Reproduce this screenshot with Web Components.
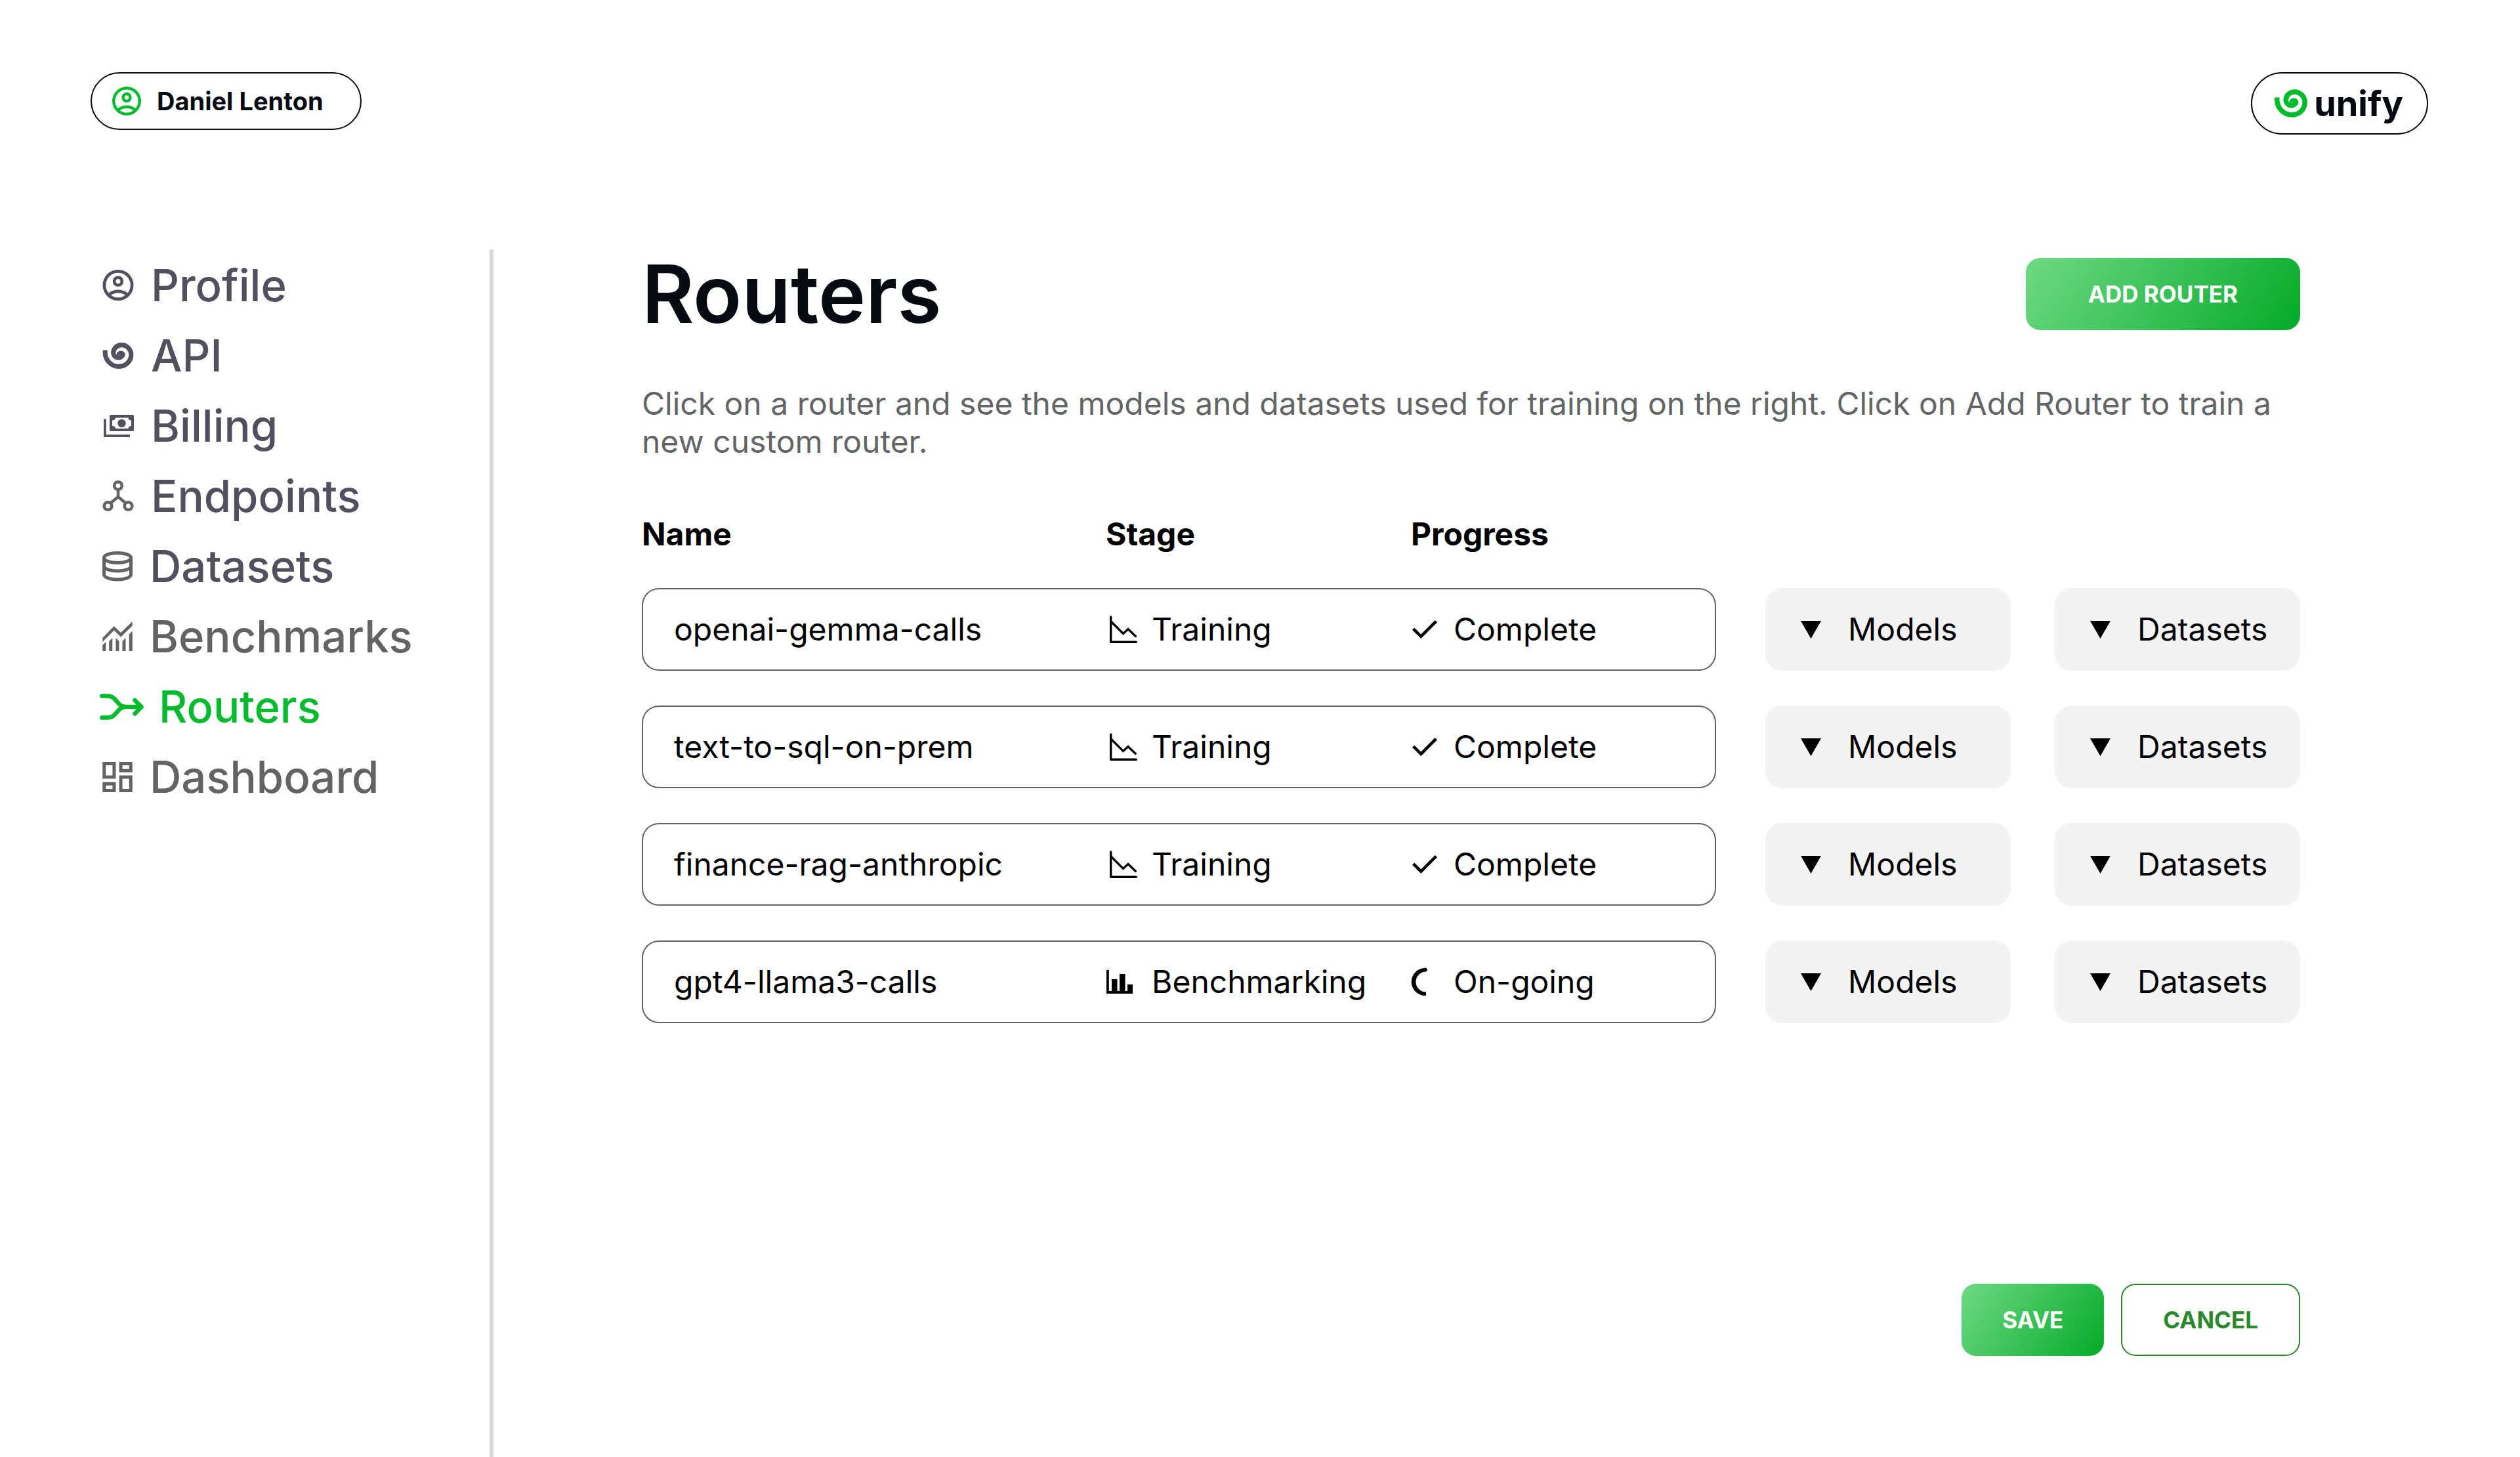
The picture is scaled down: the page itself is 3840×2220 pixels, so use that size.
<!DOCTYPE html>
<html lang="en">
<head>
<meta charset="utf-8">
<title>Routers</title>
<style>
  body { margin: 0; background: #fff; font-family: Inter, "Liberation Sans", sans-serif; color: #080a12; }
</style>
</head>
<body>
<unify-app>
  <user-chip slot="header">Daniel Lenton</user-chip>
  <brand-chip slot="header">unify</brand-chip>

  <side-nav slot="nav">
    <nav-item icon="profile">Profile</nav-item>
    <nav-item icon="spiral">API</nav-item>
    <nav-item icon="billing">Billing</nav-item>
    <nav-item icon="endpoints">Endpoints</nav-item>
    <nav-item icon="datasets">Datasets</nav-item>
    <nav-item icon="benchmarks" muted>Benchmarks</nav-item>
    <nav-item icon="routers" current>Routers</nav-item>
    <nav-item icon="dashboard" muted>Dashboard</nav-item>
  </side-nav>

  <page-heading>
    Routers
    <action-button slot="action" size="wide">ADD ROUTER</action-button>
    <span slot="intro">Click on a router and see the models and datasets used for training on the right. Click on Add Router to train a new custom router.</span>
  </page-heading>

  <router-table></router-table>

  <form-actions>
    <action-button>SAVE</action-button>
    <action-button kind="outline">CANCEL</action-button>
  </form-actions>
</unify-app>

<script>
const ICONS = {
  profile: { w: 48, h: 47, box: '80 -880 800 800', body: '<path fill="currentColor" d="M234-276q51-39 114-61.5T480-360q69 0 132 22.5T726-276q35-41 54.5-93T800-480q0-133-93.5-226.5T480-800q-133 0-226.5 93.5T160-480q0 59 19.5 111t54.5 93Zm246-164q-59 0-99.5-40.5T340-580q0-59 40.5-99.5T480-720q59 0 99.5 40.5T620-580q0 59-40.5 99.5T480-440Zm0 360q-83 0-156-31.5T197-197q-54-54-85.5-127T80-480q0-83 31.5-156T197-763q54-54 127-85.5T480-880q83 0 156 31.5T763-763q54 54 85.5 127T880-480q0 83-31.5 156T763-197q-54 54-127 85.5T480-80Zm0-80q53 0 100-15.5t86-44.5q-39-29-86-44.5T480-280q-53 0-100 15.5T294-220q39 29 86 44.5T480-160Zm0-360q26 0 43-17t17-43q0-26-17-43t-43-17q-26 0-43 17t-17 43q0 26 17 43t43 17Z"/>' },
  spiral: { w: 48, h: 40, box: '0 0 151 129', body: '<path fill="none" stroke="currentColor" stroke-width="23" d="M11.5 37V49A69 69 0 0 0 80 117.500A60 58 0 0 0 139.500 60A48 48 0 0 0 91 11.500A40 40 0 0 0 51.500 50A26 26 0 0 0 76 74A21 21 0 0 0 99 58"/><path fill="currentColor" d="M110.500 60A21 21 0 0 0 89 40C76 40 67 50 68 59C69 65 74 68 79 67C74 62 80 58 84 62C90 68 110 72 110.500 60Z"/>' },
  billing: { w: 48, h: 34, box: '-2 0 48 34', body: '<path fill="currentColor" fill-rule="evenodd" d="M11 0H44A2 2 0 0 1 46 2V23A2 2 0 0 1 44 25H11A2 2 0 0 1 9 23V2A2 2 0 0 1 11 0ZM18 4.500C18 7 16 8.500 13 8.500V17C16 17 18 18.500 18 21H37.500C37.500 18.500 39.500 17 42 17V8.500C39.500 8.500 37.500 7 37.500 4.500Z"/><circle cx="27.500" cy="13" r="6.200" fill="currentColor"/><path fill="none" stroke="currentColor" stroke-width="3.800" d="M1.900 6.500V32.100H40"/>' },
  endpoints: { w: 48, h: 47, box: '0 0 47 47', tint: '#626365', body: '<g fill="none" stroke="currentColor" stroke-width="4.600"><circle cx="23.500" cy="8" r="5.800"/><circle cx="8" cy="39" r="5.800"/><circle cx="39" cy="39" r="5.800"/><path d="M23.500 14V25L12 34.500M23.500 25L35 34.500"/></g>' },
  datasets: { w: 46, h: 46, box: '0 0 46 46', tint: '#626365', body: '<g fill="none" stroke="currentColor" stroke-width="5"><ellipse cx="23" cy="10" rx="20.500" ry="7.500"/><path d="M2.500 10V35.500C2.500 39.600 11.700 43 23 43S43.500 39.600 43.500 35.500V10M2.500 22.500C2.500 26.600 11.700 30 23 30S43.500 26.600 43.500 22.500"/></g>' },
  benchmarks: { w: 46, h: 45, box: '0 0 45.500 45', body: '<path fill="currentColor" d="M0 25L17.500 7L27.800 17L45.500 0V6.500L27.800 23.500L17.500 13.500L0 31ZM0 45V36L5 31V45ZM10 45V30L15 25V45ZM20.200 45V25L25.200 30V45ZM30.200 45V30L35.200 25V45ZM40.500 45V19.500L45.500 14.500V45Z"/>' },
  routers: { w: 60, h: 40, box: '4 0 60 40', body: '<path fill="none" stroke="currentColor" stroke-width="6.500" stroke-linecap="round" stroke-linejoin="round" d="M3.300 3.500H12C27 3.500 25 20 40 20H63.500M3.300 36.500H12C27 36.500 25 20 40 20M53.500 10L63.500 20L53.500 30.500"/>' },
  dashboard: { w: 46, h: 46, box: '0 0 45.500 46', body: '<path fill="none" stroke="currentColor" stroke-width="5" d="M2.500 2.500H17.700V23H2.500ZM27.800 2.500H43V13.200H27.800ZM2.500 33.200H17.700V43.500H2.500ZM27.800 23H43V43.500H27.800Z"/>' },
  training: { w: 48, h: 42, box: '0 0 48 42', body: '<g fill="none" stroke="currentColor" stroke-linecap="round" stroke-linejoin="round"><path stroke-width="3.400" d="M7.700 2V40.300H46.300"/><path stroke-width="3.200" stroke-linejoin="miter" d="M8 9L26.500 27.500L34 20.500L45.500 31.500"/></g>' },
  benchmarking: { w: 48, h: 42, box: '0 0 48 42', body: '<path fill="currentColor" d="M1 3H4.800V35H9V17H17.500V35H21V9H29.500V35H33V25H41V39H1Z"/>' },
  check: { w: 43, h: 42, box: '-2 -7 43 42', body: '<path fill="currentColor" d="M13.300 28L0 14.700L3.300 11.400L13.300 21.400L34.700 0L38 3.300Z"/>' },
  ongoing: { w: 43, h: 42, box: '-2 0 43 42', body: '<path fill="currentColor" d="M18.500 0A2.750 2.750 0 0 1 21 5.500A15.500 15.500 0 0 0 21 36.500V42A21 21 0 0 1 18.500 0Z"/>' },
  caret: { w: 31, h: 27, box: '0 0 31 27', body: '<path fill="currentColor" d="M0 0H31L15.500 27Z"/>' }
};

function define(name, css, html, setup) {
  const template = document.createElement('template');
  template.innerHTML = `<style>*,*::before{box-sizing:border-box}${css}</style>${html}`;
  customElements.define(name, class extends HTMLElement {
    constructor() {
      super();
      this.attachShadow({ mode: 'open' }).append(template.content.cloneNode(true));
    }
    connectedCallback() { if (setup) setup(this, this.shadowRoot); }
  });
}

function placeIcon(root, name) {
  const icon = document.createElement('ui-icon');
  icon.setAttribute('name', name);
  root.querySelector('.icon').replaceChildren(icon);
}

define('ui-icon',
  `:host{display:block;flex:none} svg{display:block;overflow:visible}`,
  `<svg aria-hidden="true"></svg>`,
  (host, root) => {
    const icon = ICONS[host.getAttribute('name')];
    const svg = root.querySelector('svg');
    svg.setAttribute('viewBox', icon.box);
    svg.setAttribute('width', host.getAttribute('width') || icon.w);
    svg.setAttribute('height', host.getAttribute('height') || icon.h);
    if (icon.tint) svg.style.color = icon.tint;
    svg.innerHTML = icon.body;
  });

define('user-chip',
  `:host{display:block}
   button{display:flex;align-items:center;gap:24px;height:88px;padding:0 56px 0 31px;border:2px solid #080a12;border-radius:44px;background:#fff;color:#080a12;font:700 38px/46px Inter,sans-serif}
   ui-icon{color:#00bb2b}`,
  `<button type="button"><ui-icon name="profile" width="44" height="44"></ui-icon><slot></slot></button>`);

define('brand-chip',
  `:host{display:block}
   a{display:flex;align-items:center;gap:10px;height:95px;padding:0 36px 0 34px;border:2px solid #000;border-radius:48px;color:#080a12;font:700 54px/66px Inter,sans-serif;text-decoration:none}
   ui-icon{color:#00bb2b}`,
  `<a href="#home"><ui-icon name="spiral" width="50" height="43"></ui-icon><slot></slot></a>`);

define('nav-item',
  `:host{display:block;color:#52505e} :host([muted]){color:#626365} :host([current]){color:#00bb2b}
   a{display:flex;align-items:center;gap:26px;color:inherit;font-weight:500;font-size:67px;line-height:83px;text-decoration:none}
   .icon{flex:none}`,
  `<a href="#"><span class="icon"></span><slot></slot></a>`,
  (host, root) => {
    const name = host.getAttribute('icon');
    placeIcon(root, name);
    const link = root.querySelector('a');
    link.href = '#' + name;
    if (host.hasAttribute('current')) link.setAttribute('aria-current', 'page');
  });

define('side-nav',
  `:host{display:block;height:100%} nav{display:flex;flex-direction:column;gap:24px;padding:13px 0 0 156px}`,
  `<nav aria-label="Main"><slot></slot></nav>`);

define('action-button',
  `:host{display:block}
   button{height:110px;padding:0 62px;border:0;border-radius:22px;background:linear-gradient(125deg,#6fd985,#04aa28);color:#fff;font:700 35px/44px Inter,sans-serif}
   :host([size=wide]) button{padding:0 95px}
   :host([kind=outline]) button{border:2px solid #2a872c;background:#fff;color:#2a872c}`,
  `<button type="button"><slot></slot></button>`);

define('page-heading',
  `:host{display:block}
   header{display:flex;align-items:center;justify-content:space-between}
   h1{margin:0;font-size:122px;line-height:136px;font-weight:600;color:#080a12}
   p{margin:70px 0 0;font-size:48px;line-height:58px;color:#636466}`,
  `<header><h1><slot></slot></h1><slot name="action"></slot></header><p><slot name="intro"></slot></p>`);

define('status-label',
  `:host{display:flex;align-items:center;gap:22px} .icon{flex:none}`,
  `<span class="icon"></span><slot></slot>`,
  (host, root) => placeIcon(root, host.getAttribute('icon')));

define('picker-button',
  `:host{display:grid;align-items:center}
   select,ui-icon{grid-area:1/1}
   ui-icon{justify-self:start;margin-left:54px;pointer-events:none}
   select{appearance:none;width:100%;height:126px;margin:0;padding:0 0 0 126px;border:0;border-radius:26px;background:#f3f3f3;color:#000;font:400 48px/58px Inter,sans-serif}`,
  `<select><option></option></select><ui-icon name="caret"></ui-icon>`,
  (host, root) => {
    root.querySelector('option').textContent = host.getAttribute('label');
    root.querySelector('select').setAttribute('aria-label', host.getAttribute('label') + ' for ' + host.getAttribute('router'));
  });

const ROUTERS = [
  ['openai-gemma-calls', 'training', 'Training', 'check', 'Complete'],
  ['text-to-sql-on-prem', 'training', 'Training', 'check', 'Complete'],
  ['finance-rag-anthropic', 'training', 'Training', 'check', 'Complete'],
  ['gpt4-llama3-calls', 'benchmarking', 'Benchmarking', 'ongoing', 'On-going']
];

define('router-table',
  `:host{display:block;margin-top:30px}
   table{width:100%;table-layout:fixed;border-collapse:separate;border-spacing:0 53px;font-size:48px;line-height:58px;color:#000}
   .stage,.progress{width:465px} .models{width:449px} .datasets{width:441px}
   th,td{padding:0;text-align:left;font-weight:400}
   thead th{height:58px;font-weight:700}
   tbody .cell{height:126px;border:solid #636363;border-width:2px 0}
   tbody .cell:first-child{padding-left:47px;border-left-width:2px;border-radius:26px 0 0 26px}
   tbody .cell.last{border-right-width:2px;border-radius:0 26px 26px 0}
   td.pick-models{padding-left:75px} td.pick-datasets{padding-left:67px}`,
  `<table>
     <colgroup><col><col class="stage"><col class="progress"><col class="models"><col class="datasets"></colgroup>
     <thead><tr><th scope="col">Name</th><th scope="col">Stage</th><th scope="col">Progress</th><td></td><td></td></tr></thead>
     <tbody></tbody>
   </table>`,
  (host, root) => {
    root.querySelector('tbody').innerHTML = ROUTERS.map(([name, stageIcon, stage, progressIcon, progress]) => `
      <tr>
        <th class="cell" scope="row">${name}</th>
        <td class="cell"><status-label icon="${stageIcon}">${stage}</status-label></td>
        <td class="cell last"><status-label icon="${progressIcon}">${progress}</status-label></td>
        <td class="pick-models"><picker-button label="Models" router="${name}"></picker-button></td>
        <td class="pick-datasets"><picker-button label="Datasets" router="${name}"></picker-button></td>
      </tr>`).join('');
  });

define('form-actions',
  `:host{display:flex;justify-content:flex-end;gap:26px;margin-top:auto}`,
  `<slot></slot>`);

define('unify-app',
  `:host{display:flex;flex-direction:column;min-height:100vh}
   .top{display:flex;justify-content:space-between;align-items:flex-start;padding:110px 140px 0 138px}
   .body{display:flex;flex:1;margin-top:175px}
   aside{flex:none;width:752px;border-right:6px solid #d9d9d9}
   main{display:flex;flex:1;flex-direction:column;min-width:0;padding:0 335px 154px 226px}`,
  `<header class="top"><slot name="header"></slot></header>
   <div class="body"><aside><slot name="nav"></slot></aside><main><slot></slot></main></div>`);
</script>
</body>
</html>
